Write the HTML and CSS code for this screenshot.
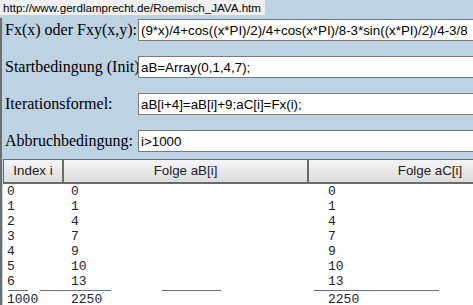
FILE: index.html
```html
<!DOCTYPE html>
<html lang="de">
<head>
    <meta charset="UTF-8" />
    <title>Roemisch JAVA</title>
    <link rel="stylesheet" href="styles.css">
</head>
<body>
    <div class="url">http://www.gerdlamprecht.de/Roemisch_JAVA.htm</div>
    <div class="page">
        <form class="form">
            <div class="row">
                <label>Fx(x) oder Fxy(x,y):</label>
                <input type="text" value="(9*x)/4+cos((x*PI)/2)/4+cos(x*PI)/8-3*sin((x*PI)/2)/4-3/8" />
            </div>
            <div class="row">
                <label>Startbedingung (Init)</label>
                <input type="text" value="aB=Array(0,1,4,7);" />
            </div>
            <div class="row">
                <label>Iterationsformel:</label>
                <input type="text" value="aB[i+4]=aB[i]+9;aC[i]=Fx(i);" />
            </div>
            <div class="row">
                <label>Abbruchbedingung:</label>
                <input type="text" value="i&gt;1000" />
            </div>
        </form>

        <div class="list">
            <div class="head">
                <div class="hcell c1">Index i</div>
                <div class="hcell c2">Folge aB[i]</div>
                <div class="hcell c3">Folge aC[i]</div>
            </div>
            <div class="data">
                <div class="drow"><span>0</span><span>0</span><span>0</span></div>
                <div class="drow"><span>1</span><span>1</span><span>1</span></div>
                <div class="drow"><span>2</span><span>4</span><span>4</span></div>
                <div class="drow"><span>3</span><span>7</span><span>7</span></div>
                <div class="drow"><span>4</span><span>9</span><span>9</span></div>
                <div class="drow"><span>5</span><span>10</span><span>10</span></div>
                <div class="drow"><span>6</span><span>13</span><span>13</span></div>
                <div class="rules">
                    <span class="rule r1"></span>
                    <span class="rule r2"></span>
                    <span class="rule r3"></span>
                    <span class="rule r4"></span>
                </div>
                <div class="drow"><span>1000</span><span>2250</span><span>2250</span></div>
            </div>
        </div>
    </div>
</body>
</html>
```

FILE: styles.css
```css
body {
    margin: 0;
    width: 473px;
    height: 305px;
    overflow: hidden;
    background: #bdd3e3;
    font-family: "Liberation Serif", serif;
}
.url {
    display: inline-block;
    height: 15px;
    line-height: 15px;
    padding: 0 4px 0 3px;
    background: #f0f0f0;
    font-family: "Liberation Sans", Arial, sans-serif;
    font-size: 11.6px;
    color: #000;
    vertical-align: top;
}
.page {
    border-left: 2px solid #6e6e6e;
    height: 290px;
}
.form {
    display: flex;
    flex-direction: column;
    gap: 15px;
    padding: 1px 0 0 3px;
    margin: 0;
}
.row {
    display: flex;
    align-items: center;
    height: 22px;
}
.row label {
    flex: none;
    width: 133px;
    white-space: nowrap;
    font-size: 16px;
    color: #000;
}
.row input {
    flex: none;
    width: 400px;
    height: 22px;
    box-sizing: border-box;
    margin: 0;
    padding: 0 2px;
    border: 1px solid #7a7a7a;
    background: #fff;
    font-family: "Liberation Sans", Arial, sans-serif;
    font-size: 13.333px;
    color: #000;
    outline: none;
}
.list {
    margin: 7px 0 0 1px;
}
.head {
    display: flex;
    height: 22px;
    border-top: 1px solid #6a6a6a;
    border-bottom: 2px solid #6a6a6a;
    border-left: 1px solid #6a6a6a;
    background: linear-gradient(180deg, #f5f5f5, #dcdcdc);
}
.hcell {
    flex: none;
    box-sizing: border-box;
    text-align: center;
    line-height: 22px;
    font-family: "Liberation Sans", Arial, sans-serif;
    font-size: 13.333px;
    color: #222;
    border-right: 2px solid #6a6a6a;
}
.c1 { width: 60px; }
.c2 { width: 245px; }
.c3 { width: 244px; }
.data {
    background: #fff;
    height: 124px;
    font-family: "Liberation Mono", "Courier New", monospace;
    font-size: 13px;
    line-height: 15px;
    color: #1c2230;
}
.drow {
    display: grid;
    grid-template-columns: 64px 257px auto;
    padding-left: 4px;
    white-space: nowrap;
}
.rules {
    display: flex;
    height: 3px;
    padding-left: 5px;
}
.rule {
    height: 0;
    margin-top: 1px;
    border-top: 1px solid #6b6f86;
}
.r1 { width: 20px; }
.r2 { width: 71px; margin-left: 12px; }
.r3 { width: 59px; margin-left: 51px; }
.r4 { width: 125px; margin-left: 93px; }
```
